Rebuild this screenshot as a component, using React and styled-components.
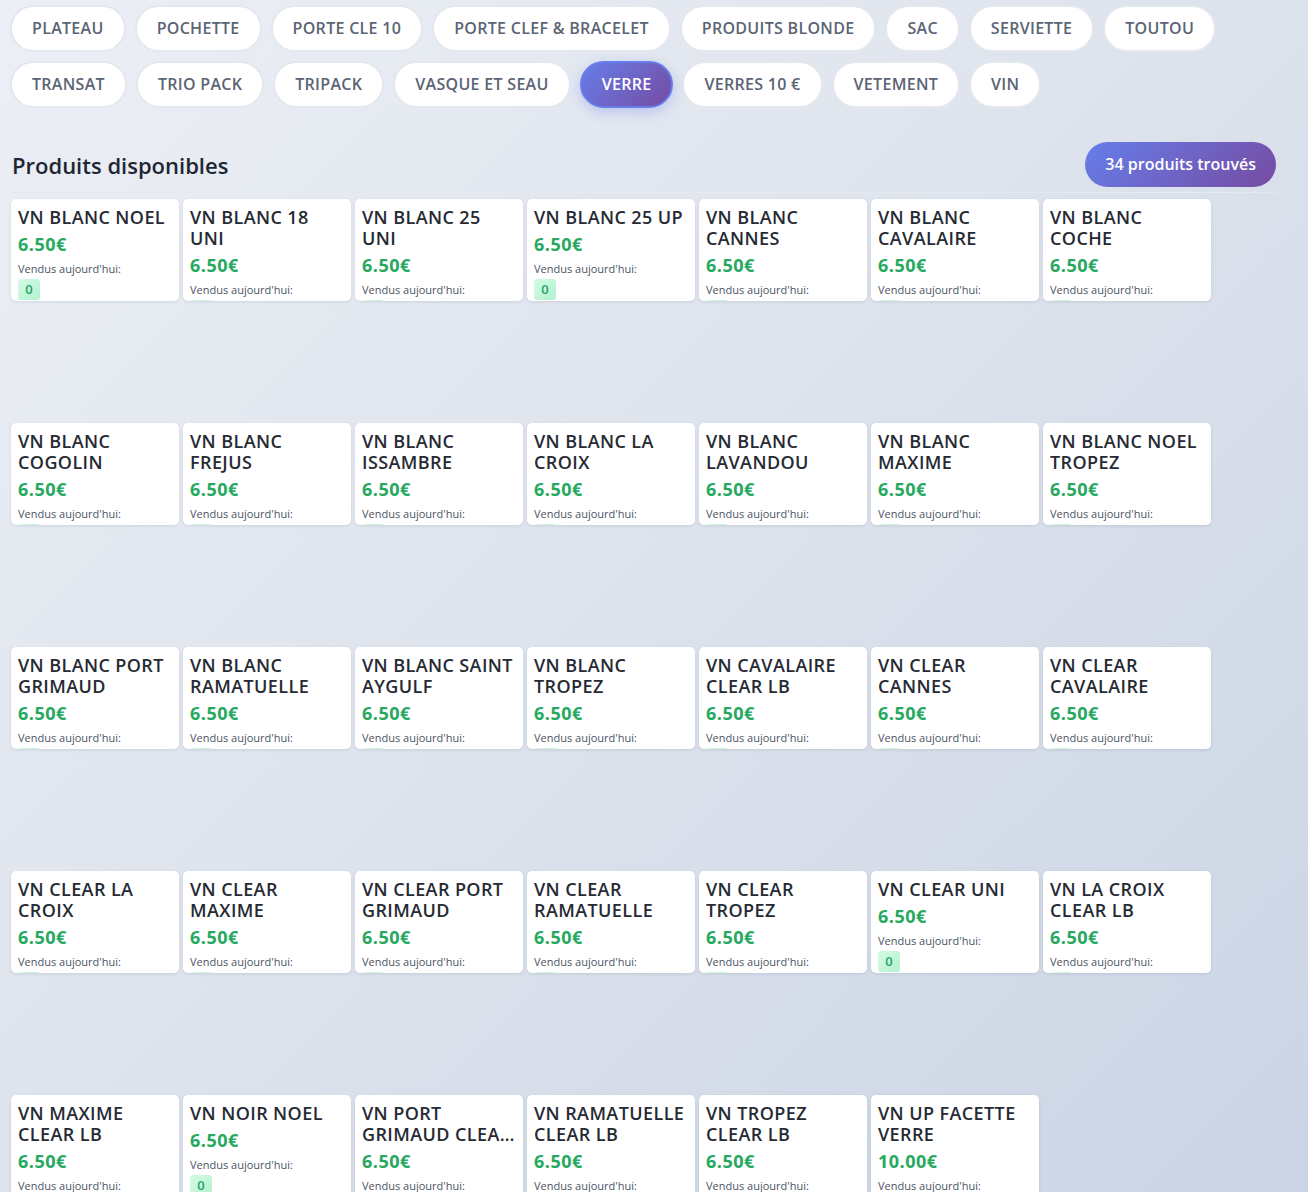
import React from 'react';
import styled, { createGlobalStyle, css } from 'styled-components';

const GlobalStyle = createGlobalStyle`
  html, body {
    margin: 0;
    padding: 0;
  }
  body {
    font-family: "Open Sans", "Noto Sans", sans-serif;
    background: linear-gradient(135deg, #eceff5 0%, #dce2ec 50%, #c9d3e4 100%);
    min-height: 1192px;
    overflow: hidden;
  }
`;

const CATEGORIES = [
  'PLATEAU', 'POCHETTE', 'PORTE CLE 10', 'PORTE CLEF & BRACELET', 'PRODUITS BLONDE',
  'SAC', 'SERVIETTE', 'TOUTOU', 'TRANSAT', 'TRIO PACK', 'TRIPACK', 'VASQUE ET SEAU',
  'VERRE', 'VERRES 10 €', 'VETEMENT', 'VIN',
];

const PRODUCTS = [
  'VN BLANC NOEL', 'VN BLANC 18 UNI', 'VN BLANC 25 UNI', 'VN BLANC 25 UP', 'VN BLANC CANNES',
  'VN BLANC CAVALAIRE', 'VN BLANC COCHE', 'VN BLANC COGOLIN', 'VN BLANC FREJUS',
  'VN BLANC ISSAMBRE', 'VN BLANC LA CROIX', 'VN BLANC LAVANDOU', 'VN BLANC MAXIME',
  'VN BLANC NOEL TROPEZ', 'VN BLANC PORT GRIMAUD', 'VN BLANC RAMATUELLE',
  'VN BLANC SAINT AYGULF', 'VN BLANC TROPEZ', 'VN CAVALAIRE CLEAR LB', 'VN CLEAR CANNES',
  'VN CLEAR CAVALAIRE', 'VN CLEAR LA CROIX', 'VN CLEAR MAXIME', 'VN CLEAR PORT GRIMAUD',
  'VN CLEAR RAMATUELLE', 'VN CLEAR TROPEZ', 'VN CLEAR UNI', 'VN LA CROIX CLEAR LB',
  'VN MAXIME CLEAR LB', 'VN NOIR NOEL', 'VN PORT GRIMAUD CLEAR LB', 'VN RAMATUELLE CLEAR LB',
  'VN TROPEZ CLEAR LB',
].map((name) => ({ name, price: '6.50€', sold: 0 }))
  .concat([{ name: 'VN UP FACETTE VERRE', price: '10.00€', sold: 0 }]);

const Page = styled.div`
  padding: 5px 32px 0 12px;
`;

const ChipBar = styled.div`
  display: flex;
  flex-wrap: wrap;
  gap: 9px;
  margin-left: -2px;
`;

const Chip = styled.button`
  font-family: inherit;
  font-size: 16px;
  font-weight: 600;
  line-height: 23px;
  letter-spacing: 0.3px;
  color: #5a6474;
  background: #fff;
  border: 2px solid #e3e7ee;
  border-radius: 24px;
  padding: 10px 20px;
  margin: 0;
  cursor: pointer;
  ${(props) => props.active && css`
    color: #fff;
    background: linear-gradient(135deg, #667eea 0%, #764ba2 100%);
    border-color: #667eea;
    box-shadow: 0 4px 14px rgba(102, 126, 234, 0.35);
  `}
`;

const Header = styled.div`
  display: flex;
  align-items: center;
  justify-content: space-between;
  margin-top: 34px;
  padding-bottom: 5px;
  border-bottom: 1px solid #e4e9f0;
`;

const Title = styled.h2`
  margin: 0;
  font-size: 22px;
  font-weight: 600;
  color: #1f2633;
`;

const Count = styled.div`
  font-size: 16px;
  font-weight: 600;
  line-height: 25px;
  color: #fff;
  padding: 10px 20px;
  border-radius: 24px;
  background: linear-gradient(135deg, #667eea 0%, #764ba2 100%);
`;

const Grid = styled.div`
  display: grid;
  grid-template-columns: repeat(7, 168px);
  grid-auto-rows: 220px;
  gap: 4px;
  margin: 6px 0 0 -1px;
  align-items: start;
`;

const Card = styled.div`
  height: 102px;
  box-sizing: border-box;
  overflow: hidden;
  background: #fff;
  border-radius: 5px;
  padding: 8px 7px 0;
  box-shadow: 0 1px 3px rgba(40, 60, 90, 0.12);
`;

const Name = styled.div`
  font-size: 18px;
  font-weight: 600;
  line-height: 21px;
  letter-spacing: 0.4px;
  color: #262a33;
  display: -webkit-box;
  -webkit-line-clamp: 2;
  -webkit-box-orient: vertical;
  overflow: hidden;
`;

const Price = styled.div`
  margin-top: 5px;
  font-size: 18px;
  font-weight: 700;
  line-height: 22px;
  letter-spacing: 0.5px;
  color: #27a95f;
`;

const SoldLabel = styled.div`
  margin-top: 6px;
  font-size: 11px;
  line-height: 15px;
  color: #4a5463;
`;

const SoldBadge = styled.div`
  display: inline-block;
  margin-top: 3px;
  min-width: 22px;
  height: 21px;
  box-sizing: border-box;
  text-align: center;
  font-size: 13px;
  font-weight: 600;
  line-height: 21px;
  color: #26a36b;
  border-radius: 3px;
  background: linear-gradient(135deg, #d4fbe4 0%, #b2f2cf 100%);
`;

function ProductCard({ product }) {
  return (
    <Card>
      <Name>{product.name}</Name>
      <Price>{product.price}</Price>
      <SoldLabel>Vendus aujourd'hui:</SoldLabel>
      <SoldBadge>{product.sold}</SoldBadge>
    </Card>
  );
}

export default function App() {
  return (
    <Page>
      <GlobalStyle />
      <ChipBar>
        {CATEGORIES.map((c) => (
          <Chip key={c} active={c === 'VERRE'}>{c}</Chip>
        ))}
      </ChipBar>
      <Header>
        <Title>Produits disponibles</Title>
        <Count>{`${PRODUCTS.length} produits trouvés`}</Count>
      </Header>
      <Grid>
        {PRODUCTS.map((p) => (
          <ProductCard key={p.name} product={p} />
        ))}
      </Grid>
    </Page>
  );
}
